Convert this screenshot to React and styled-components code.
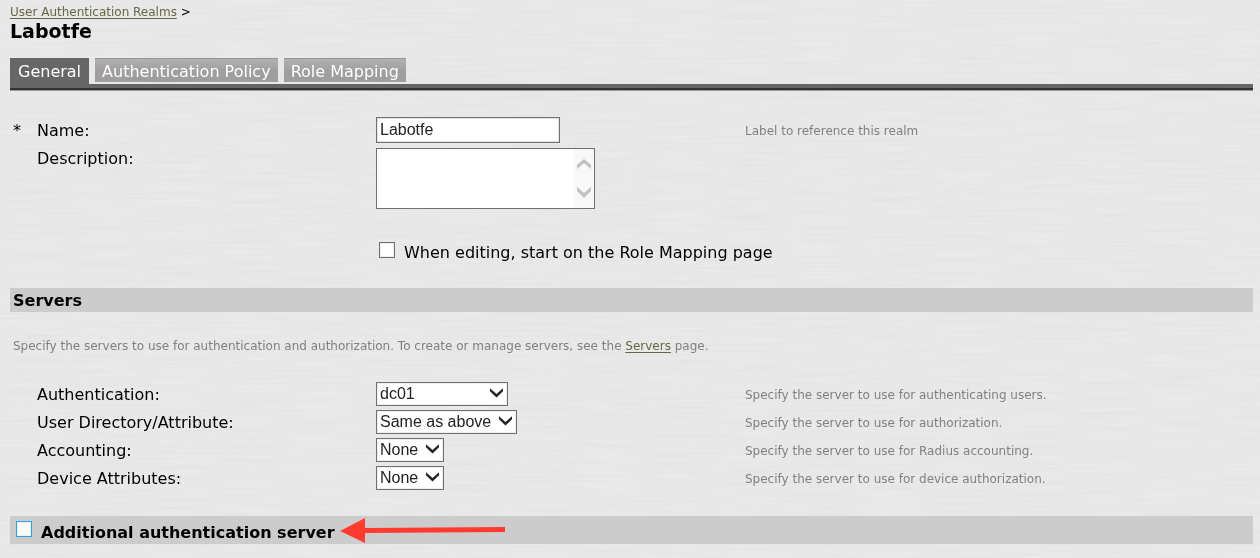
import React from 'react';
import styled, { createGlobalStyle, css } from 'styled-components';

const GlobalStyle = createGlobalStyle`
  * { box-sizing: border-box; }
  html { background: #e5e5e5; }
  body {
    margin: 0;
    color: #000;
    font: 16px/20px "DejaVu Sans", Verdana, sans-serif;
  }
`;

const Texture = styled.svg`
  position: fixed;
  inset: 0;
  width: 100%;
  height: 100%;
  z-index: -1;
`;

const Page = styled.main`
  padding: 4px 7px 14px 10px;
`;

const link = css`
  color: #666644;
  text-decoration: underline;
  text-underline-offset: 2px;
`;

const Breadcrumb = styled.nav`
  font-size: 12px;
  line-height: 16px;
  a { ${link} }
`;

const Title = styled.h1`
  margin: 0;
  font-size: 19px;
  line-height: 22px;
`;

const Tabs = styled.nav`
  display: flex;
  align-items: flex-start;
  gap: 6px;
  margin-top: 16px;
  border-bottom: 4px solid #666;
`;

const Tab = styled.button`
  height: ${(p) => (p.$active ? 26 : 24)}px;
  padding: 1px ${(p) => (p.$active ? 8 : 7)}px 0;
  border: 0;
  border-top: 1px solid ${(p) => (p.$active ? '#666' : '#979595')};
  background: ${(p) => (p.$active ? '#666' : 'linear-gradient(#b2b0b0, #a09e9e 50%, #9f9d9d)')};
  color: #fff;
  font: inherit;
  line-height: 24px;
  white-space: nowrap;
  display: flex;
  align-items: flex-start;
`;

const TabRule = styled.div`
  height: 3px;
  background: #333;
  border-bottom: 1px solid #999;
`;

const columns = css`
  display: grid;
  grid-template-columns: 27px 339fr 369fr 508fr;
`;

const Details = styled.section`
  padding: 26px 0 25px;
`;

const Row = styled.div`
  ${columns}
  align-items: ${(p) => (p.$top ? 'start' : 'center')};
  margin-bottom: ${(p) => p.$gap || 0}px;
`;

const Required = styled.span`
  padding: 2px 0 0 3px;
`;

const Label = styled.label`
  grid-column: 2;
  padding-top: ${(p) => (p.$top ? 1 : 2)}px;
`;

const Hint = styled.span`
  grid-column: 4;
  padding-top: 2px;
  color: #808080;
  font-size: 12px;
  line-height: 16px;
`;

const controlFont = css`
  color: #222;
  font: 16px/20px "Liberation Sans", Arial, sans-serif;
`;

const TextInput = styled.input`
  ${controlFont}
  width: 184px;
  height: 26px;
  padding: 0 3px 1px;
  border: 1px solid #707070;
  box-shadow: inset 0 0 0 1px #e3e3e3;
  background: #fff;
`;

const TextBox = styled.div`
  display: flex;
  width: 219px;
  height: 61px;
  border: 1px solid #707070;
  background: #fff;
`;

const TextArea = styled.textarea`
  ${controlFont}
  flex: 1;
  min-width: 0;
  padding: 2px;
  border: 0;
  resize: none;
  overflow: hidden;
`;

const ScrollStrip = styled.svg`
  width: 20px;
  height: 59px;
  background: #f8f8f8;
`;

const CheckLine = styled.div`
  grid-column: 3;
  grid-column-end: span 2;
  display: flex;
  align-items: center;
  gap: 9px;
  padding: 0 0 0 3px;
  label { padding-top: 2px; }
`;

const CheckBox = styled.input`
  appearance: none;
  flex: none;
  width: 16px;
  height: 16px;
  margin: 0 0 4px;
  border: 1px solid ${(p) => (p.$focus ? '#2ea0da' : '#707070')};
  box-shadow: inset 0 0 0 1px #eee;
  background: #fff;
`;

const SectionBar = styled.h2`
  display: flex;
  align-items: center;
  min-height: 24px;
  margin: 0;
  padding: 1px 3px 0;
  background: #ccc;
  font-size: 16px;
  line-height: 20px;
`;

const ExtraBar = styled(SectionBar)`
  height: 28px;
  padding: 2px 6px 0;
  label { padding-top: 4px; margin-left: 9px; }
`;

const Intro = styled.p`
  margin: 26px 3px 27px;
  color: #808080;
  font-size: 12px;
  line-height: 17px;
  a { ${link} }
`;

const ServerRows = styled.div`
  display: grid;
  gap: 4px;
  margin-bottom: 26px;
`;

const SelectBox = styled.div`
  display: grid;
  justify-self: start;
  width: ${(p) => p.$width}px;
  > * { grid-area: 1 / 1; }
  svg {
    justify-self: end;
    align-self: center;
    margin: 0 4px 2px 0;
    pointer-events: none;
  }
`;

const Select = styled.select`
  ${controlFont}
  appearance: none;
  width: 100%;
  height: 24px;
  padding: 0 3px;
  border: 1px solid #707070;
  border-radius: 0;
  box-shadow: inset 0 0 0 1px #eee;
  background: #fff;
`;

const Arrow = styled.svg`
  flex: none;
  margin-left: 5px;
`;

const servers = [
  { id: 'auth', label: 'Authentication:', value: 'dc01', width: 132, hint: 'Specify the server to use for authenticating users.' },
  { id: 'directory', label: 'User Directory/Attribute:', value: 'Same as above', width: 141, hint: 'Specify the server to use for authorization.' },
  { id: 'accounting', label: 'Accounting:', value: 'None', width: 68, hint: 'Specify the server to use for Radius accounting.' },
  { id: 'device', label: 'Device Attributes:', value: 'None', width: 68, hint: 'Specify the server to use for device authorization.' },
];

function BrushedMetal() {
  return (
    <Texture aria-hidden="true">
      <filter id="brushed" x="0" y="0" width="100%" height="100%">
        <feTurbulence type="fractalNoise" baseFrequency="0.014 0.4" numOctaves="2" seed="4" />
        <feColorMatrix values="0.05 0 0 0 0.872  0.05 0 0 0 0.872  0.05 0 0 0 0.872  0 0 0 0 1" colorInterpolationFilters="sRGB" />
      </filter>
      <rect width="100%" height="100%" filter="url(#brushed)" />
    </Texture>
  );
}

function ServerRow({ id, label, value, width, hint }) {
  return (
    <Row>
      <Label htmlFor={id}>{label}</Label>
      <SelectBox $width={width}>
        <Select id={id} defaultValue={value}>
          <option>{value}</option>
        </Select>
        <svg width="15" height="10" viewBox="0 0 15 10" aria-hidden="true">
          <path d="M1 0.3v3l6.5 6.3 6.5-6.3v-3L7.5 6z" fill="#222" />
        </svg>
      </SelectBox>
      <Hint>{hint}</Hint>
    </Row>
  );
}

export default function App() {
  return (
    <>
      <GlobalStyle />
      <BrushedMetal />
      <Page>
        <Breadcrumb><a href="#realms">User Authentication Realms</a> &gt;</Breadcrumb>
        <Title>Labotfe</Title>
        <Tabs>
          <Tab type="button" $active>General</Tab>
          <Tab type="button">Authentication Policy</Tab>
          <Tab type="button">Role Mapping</Tab>
        </Tabs>
        <TabRule />
        <Details>
          <Row $gap={5}>
            <Required>*</Required>
            <Label htmlFor="name">Name:</Label>
            <TextInput id="name" defaultValue="Labotfe" />
            <Hint>Label to reference this realm</Hint>
          </Row>
          <Row $top $gap={32}>
            <Label $top htmlFor="description">Description:</Label>
            <TextBox>
              <TextArea id="description" />
              <ScrollStrip viewBox="0 0 20 59" aria-hidden="true">
                <path d="M3 20v-4l7-6 7 6v4l-7-6z" fill="#c1c1c1" />
                <path d="M3 38v4l7 7 7-7v-4l-7 6z" fill="#c1c1c1" />
              </ScrollStrip>
            </TextBox>
          </Row>
          <Row>
            <CheckLine>
              <CheckBox type="checkbox" id="start-mapping" />
              <label htmlFor="start-mapping">When editing, start on the Role Mapping page</label>
            </CheckLine>
          </Row>
        </Details>
        <SectionBar>Servers</SectionBar>
        <Intro>
          Specify the servers to use for authentication and authorization. To create or manage servers, see the <a href="#servers">Servers</a> page.
        </Intro>
        <ServerRows>
          {servers.map((s) => <ServerRow key={s.id} {...s} />)}
        </ServerRows>
        <ExtraBar>
          <CheckBox type="checkbox" id="additional" $focus />
          <label htmlFor="additional">Additional authentication server</label>
          <Arrow width="166" height="26" viewBox="0 0 166 26" aria-hidden="true">
            <path d="M0 13L25 0v10l140-1v5L25 15v10z" fill="#ff3b30" />
          </Arrow>
        </ExtraBar>
      </Page>
    </>
  );
}
